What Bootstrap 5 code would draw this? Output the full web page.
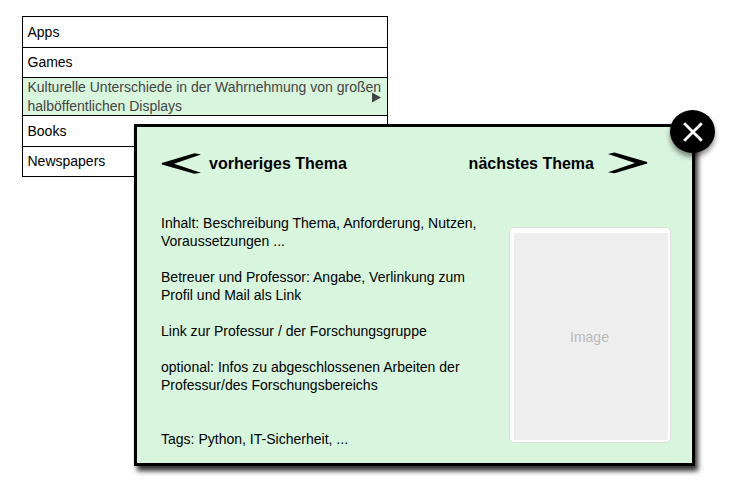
<!DOCTYPE html>
<html lang="de">
<head>
<meta charset="utf-8">
<meta name="viewport" content="width=device-width, initial-scale=1">
<title>Themen</title>
<link href="https://cdn.jsdelivr.net/npm/bootstrap@5.3.0/dist/css/bootstrap.min.css" rel="stylesheet">
<style>
body{font-family:"Liberation Sans",Arial,sans-serif;font-size:14px;line-height:18px;color:#000;background:#fff;height:496px;overflow:hidden}
.topics{width:366px;margin:16px 0 0 22px;border:1px solid #000;--bs-list-group-color:#000}
.topics .list-group-item{border:0;border-bottom:1px solid #000;padding:0 5px 0 4.5px;height:30px;line-height:18px}
.topics .list-group-item:first-child,.topics .books{height:31px}
.topics .games,.topics .books{padding-bottom:1px}
.topics .list-group-item:last-child{border-bottom:0;height:29px;padding-bottom:2px}
.topics .topic-open{height:38px;background:#d8f5dd;color:#444;line-height:19px;white-space:nowrap}
.topic-arrow{right:6px;top:14px}
.topic-panel{left:134px;top:124px;width:561px;height:342px;border:3px solid #000;background:#d8f5dd;box-shadow:3px 5px 5px rgba(0,0,0,.8);padding:24px 21px 0 24px}
.panel-nav{height:24px;font-size:16px;font-weight:700;padding-right:23px}
.panel-nav span{padding-top:1px}
.next-arrow{margin-left:14px}
.panel-text{width:330px;padding-top:39px;letter-spacing:.01px}
.panel-text p{margin:0 0 18px}
.panel-text .tags{margin-top:36px}
.picture{width:162px;height:216px;margin-top:52px;border:1px solid #ddd;border-radius:5px;background:#fff;padding:5px 2px 2px 4px}
.picture-fill{background:#eee;color:#bbb;padding-right:3px}
.close-round{left:670px;top:110px;width:45px;height:43px;background:#000;box-shadow:0 4px 5px rgba(0,0,0,.45);padding:0}
</style>
<script src="https://cdn.jsdelivr.net/npm/bootstrap@5.3.0/dist/js/bootstrap.bundle.min.js"></script>
</head>
<body class="position-relative">
<div class="d-flex">
<div class="list-group rounded-0 topics">
  <div class="list-group-item d-flex align-items-center">Apps</div>
  <div class="list-group-item d-flex align-items-center games">Games</div>
  <div class="list-group-item topic-open">Kulturelle Unterschiede in der Wahrnehmung von großen<br>halböffentlichen Displays
    <svg class="position-absolute topic-arrow" width="9" height="11" viewBox="0 0 9 11"><path d="M0 .5L9 5.5L0 10.5Z" fill="#444"/></svg>
  </div>
  <div class="list-group-item d-flex align-items-center books">Books</div>
  <div class="list-group-item d-flex align-items-center">Newspapers</div>
</div>
</div>
<section class="topic-panel position-absolute">
  <div class="panel-nav d-flex justify-content-between align-items-center">
    <div class="d-flex align-items-center">
      <svg class="me-2" width="40" height="22" viewBox="0 0 40 22"><path d="M.8 10.9V12.4L33.5 21.8L40 20.8L13 11.7L40 2.6L33.5 1.3Z" fill="#000"/></svg><span>vorheriges Thema</span>
    </div>
    <div class="d-flex align-items-center">
      <span>nächstes Thema</span><svg class="next-arrow" width="40" height="22" viewBox="0 0 40 22"><path d="M39.2 10.1V11.6L6.5 21.2L0 20.2L27 11L0 2L6.5 .6Z" fill="#000"/></svg>
    </div>
  </div>
  <div class="d-flex justify-content-between align-items-start">
    <div class="panel-text">
      <p>Inhalt: Beschreibung Thema, Anforderung, Nutzen,<br>Voraussetzungen ...</p>
      <p>Betreuer und Professor: Angabe, Verlinkung zum<br>Profil und Mail als Link</p>
      <p>Link zur Professur / der Forschungsgruppe</p>
      <p>optional: Infos zu abgeschlossenen Arbeiten der<br>Professur/des Forschungsbereichs</p>
      <p class="tags">Tags: Python, IT-Sicherheit, ...</p>
    </div>
    <div class="picture"><div class="picture-fill w-100 h-100 d-flex align-items-center justify-content-center">Image</div></div>
  </div>
</section>
<button type="button" class="close-round position-absolute rounded-circle border-0 d-flex align-items-center justify-content-center" aria-label="Schließen">
  <svg width="20" height="20" viewBox="0 0 20 20"><path d="M1.2 1.2L18.8 18.8M18.8 1.2L1.2 18.8" stroke="#fff" stroke-width="2.8"/></svg>
</button>
</body>
</html>
